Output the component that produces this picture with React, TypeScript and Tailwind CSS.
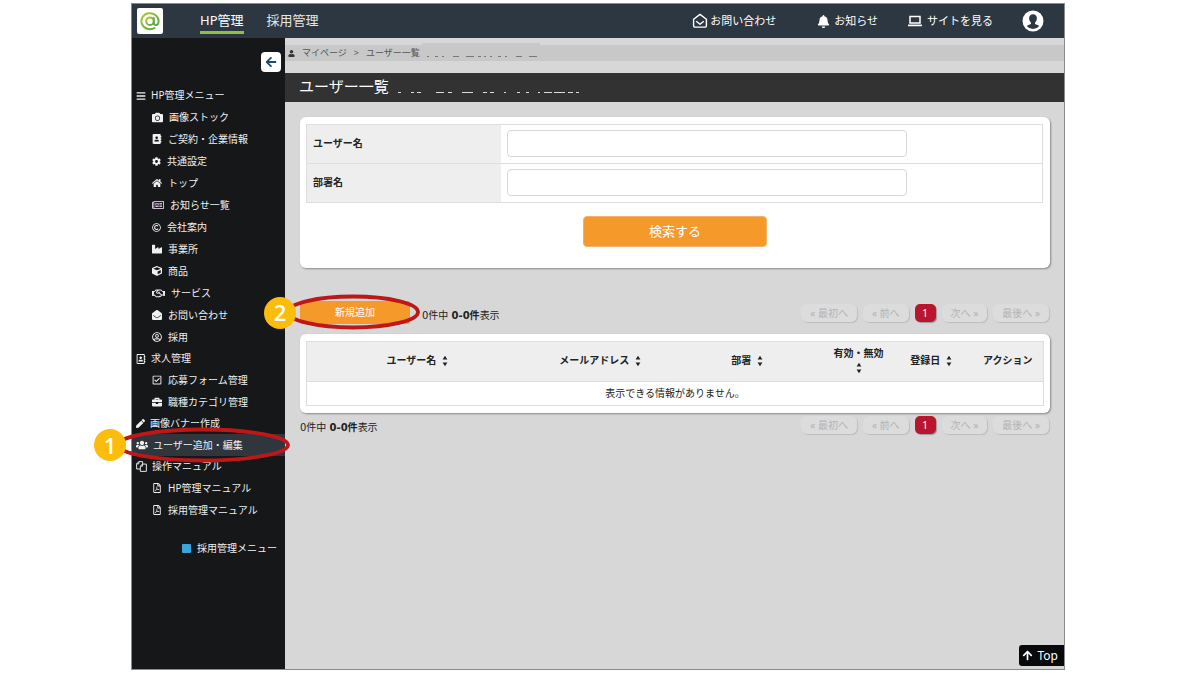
import React from "react";
import type { ReactNode } from "react";
import type { IconType } from "react-icons";
import {
  FaAddressBook,
  FaArrowLeft,
  FaArrowUp,
  FaBars,
  FaBell,
  FaBriefcase,
  FaCamera,
  FaCog,
  FaCube,
  FaEnvelopeOpen,
  FaHome,
  FaIndustry,
  FaPen,
  FaRegAddressBook,
  FaRegCheckSquare,
  FaRegCopyright,
  FaRegFilePdf,
  FaRegHandshake,
  FaRegNewspaper,
  FaRegUserCircle,
  FaUser,
  FaUsers,
} from "react-icons/fa";

type MenuItem = {
  label: string;
  icon: IconType | typeof FilesIcon;
  sub?: boolean;
  active?: boolean;
  iconClass?: string;
};

function FilesIcon({ className }: { className?: string }) {
  return (
    <svg viewBox="0 0 14 14" className={className} fill="none" stroke="currentColor" strokeWidth="1.200" strokeLinejoin="round" aria-hidden="true">
      <path d="M5.400 10.200H.8V3.600L3.600.8h4.800v3" />
      <path d="M3.600.8v2.800H.8" />
      <path d="M8.200 3.900h5v9.300H5.500V6.600z" />
      <path d="M8.200 3.900v2.700H5.500" />
    </svg>
  );
}

const menu: MenuItem[] = [
  { label: "HP管理メニュー", icon: FaBars },
  { label: "画像ストック", icon: FaCamera, sub: true, iconClass: "size-[11px]" },
  { label: "ご契約・企業情報", icon: FaAddressBook, sub: true },
  { label: "共通設定", icon: FaCog, sub: true, iconClass: "size-[9px]" },
  { label: "トップ", icon: FaHome, sub: true },
  { label: "お知らせ一覧", icon: FaRegNewspaper, sub: true, iconClass: "size-3 text-[#cdb9d0]" },
  { label: "会社案内", icon: FaRegCopyright, sub: true, iconClass: "size-[9px]" },
  { label: "事業所", icon: FaIndustry, sub: true },
  { label: "商品", icon: FaCube, sub: true },
  { label: "サービス", icon: FaRegHandshake, sub: true, iconClass: "size-[13px]" },
  { label: "お問い合わせ", icon: FaEnvelopeOpen, sub: true },
  { label: "採用", icon: FaRegUserCircle, sub: true },
  { label: "求人管理", icon: FaRegAddressBook },
  { label: "応募フォーム管理", icon: FaRegCheckSquare, sub: true },
  { label: "職種カテゴリ管理", icon: FaBriefcase, sub: true },
  { label: "画像バナー作成", icon: FaPen, iconClass: "size-[9px]" },
  { label: "ユーザー追加・編集", icon: FaUsers, active: true, iconClass: "size-3" },
  { label: "操作マニュアル", icon: FilesIcon, iconClass: "size-[11px]" },
  { label: "HP管理マニュアル", icon: FaRegFilePdf, sub: true },
  { label: "採用管理マニュアル", icon: FaRegFilePdf, sub: true },
];

const columns: { label: string; sortable: boolean; width: string }[] = [
  { label: "ユーザー名", sortable: true, width: "w-[224px]" },
  { label: "メールアドレス", sortable: true, width: "w-[142px]" },
  { label: "部署", sortable: true, width: "w-[152px]" },
  { label: "有効・無効", sortable: true, width: "w-[68px]" },
  { label: "登録日", sortable: true, width: "w-[80px]" },
  { label: "アクション", sortable: false, width: "w-[71px]" },
];

function Logo() {
  return (
    <svg viewBox="0 0 26 26" className="size-[26px]" fill="none" aria-hidden="true">
      <defs>
        <linearGradient id="logo" x1="0" y1="0" x2="1" y2="1">
          <stop offset="0" stopColor="#b5c83c" />
          <stop offset="1" stopColor="#4aa544" />
        </linearGradient>
      </defs>
      <g stroke="url(#logo)" strokeWidth="2" strokeLinecap="round">
        <path d="M17.500 20A8.600 8 0 1 1 21.600 13C21.600 15.800 20.400 17 18.800 17C17.400 17 16.800 16.200 16.800 14.800V9.800" />
        <circle cx="13" cy="13.200" r="3.800" />
      </g>
    </svg>
  );
}

function MailIcon() {
  return (
    <svg viewBox="0 0 16 16" className="size-4" fill="none" stroke="currentColor" strokeWidth="1.400" strokeLinejoin="round" aria-hidden="true">
      <path d="M1.600 6.200 8 1.400l6.400 4.800v6.600a1.300 1.300 0 0 1-1.300 1.300H2.900a1.300 1.300 0 0 1-1.300-1.300z" />
      <path d="M4.200 8.200 8 11.200 11.800 8.200" />
    </svg>
  );
}

function LaptopIcon() {
  return (
    <svg viewBox="0 0 16 12" className="h-3 w-4" fill="none" stroke="currentColor" strokeWidth="1.500" aria-hidden="true">
      <path d="M3 1.500h10v6.500H3z" />
      <path d="M1 10.400h14" strokeWidth="1.700" />
    </svg>
  );
}

function Avatar() {
  return (
    <svg viewBox="0 0 22 22" className="size-[22px]" aria-hidden="true">
      <circle cx="11" cy="11" r="10.500" fill="#fff" />
      <path
        d="M11 4.200c-2.500 0-3.900 1.700-3.900 4 0 1.800.8 3.400 1.900 4.200v1.500c-1.700.7-3.500 1.100-4.300 2.100A8.300 8.300 0 0 0 11 19a8.300 8.300 0 0 0 6.300-3c-.8-1-2.600-1.400-4.300-2.100v-1.500c1.100-.8 1.900-2.400 1.900-4.200 0-2.300-1.400-4-3.900-4z"
        fill="#2d3742"
      />
    </svg>
  );
}

function SortIcon() {
  return (
    <svg viewBox="0 0 6 12" className="mx-[3px] inline-block h-3 w-[6px] align-middle" fill="#222" aria-hidden="true">
      <path d="M3 .8 5.400 4.600H.6zM3 11.200.6 7.400h4.800z" />
    </svg>
  );
}

function Badge({ children, className }: { children: ReactNode; className: string }) {
  return (
    <span
      className={`absolute z-20 flex size-8 items-center justify-center rounded-full bg-[#fbbc0b] font-['Open_Sans','Noto_Sans',sans-serif] text-[22px] font-semibold text-white ${className}`}
    >
      {children}
    </span>
  );
}

function Pagination() {
  const muted =
    "h-[18px] rounded-[6px] bg-[#dcdcdc] px-[9px] text-[#b3b3b3] shadow-[1px_1px_1px_#bdbdbd]";
  return (
    <nav className="flex gap-[6px] pr-px text-[10px] leading-[18px]" aria-label="ページ送り">
      <button className={muted}>« 最初へ</button>
      <button className={muted}>« 前へ</button>
      <button className="h-[18px] w-[21px] rounded-[5px] bg-[#b9152f] text-white shadow-[1px_1px_1px_#999]">1</button>
      <button className={muted}>次へ »</button>
      <button className={muted}>最後へ »</button>
    </nav>
  );
}

function Count() {
  return (
    <p className="font-['DejaVu_Sans','Noto_Sans_CJK_JP',sans-serif] text-[10px] leading-4 text-[#222]">
      0件中 <b>0-0件</b>表示
    </p>
  );
}

function Sidebar() {
  return (
    <aside className="w-[153px] shrink-0 bg-[#151719] text-[10px] text-[#f0f0f0]">
      <div className="flex justify-end px-1 pt-[14px]">
        <button aria-label="メニューを閉じる" className="flex size-5 items-center justify-center rounded-[4px] bg-white text-[#1c4a6e]">
          <FaArrowLeft className="size-3" />
        </button>
      </div>
      <ul className="mt-[13px]">
        {menu.map(({ label, icon: Icon, sub, active, iconClass }) => (
          <li key={label} className={active ? "relative bg-[#2f363d]" : ""}>
            <a
              href="#"
              className={`flex items-center whitespace-nowrap ${
                sub ? "h-[22px] gap-[6px] pl-5" : active ? "h-[22px] gap-[5px] pl-1" : "h-[21px] gap-[5px] pl-1"
              }`}
            >
              <Icon className={`shrink-0 ${iconClass ?? "size-[10px]"}`} />
              {label}
            </a>
            {active && (
              <>
                <svg viewBox="0 0 174 36" className="pointer-events-none absolute -left-[16px] -top-[7px] z-10 h-9 w-[174px]" fill="none" aria-hidden="true">
                  <ellipse cx="87" cy="18" rx="85" ry="15.500" stroke="#bd1717" strokeWidth="3.800" />
                </svg>
                <Badge className="-left-[38px] -top-[5px]">1</Badge>
              </>
            )}
          </li>
        ))}
      </ul>
      <a href="#" className="mt-4 flex h-[22px] items-center justify-end gap-[6px] pr-2">
        <span className="size-[9px] rounded-[1px] bg-[#38a5e0]" />
        採用管理メニュー
      </a>
    </aside>
  );
}

function SearchRow({ id, label }: { id: string; label: string }) {
  return (
    <div className="flex h-[39px] border-b border-[#dedede]">
      <label htmlFor={id} className="flex w-[194px] shrink-0 items-center bg-[#eee] pb-px pl-[6px] font-bold">
        {label}
      </label>
      <div className="flex flex-1 items-center px-[6px] pb-px">
        <input id={id} type="text" className="h-[27px] w-[400px] max-w-full rounded-[4px] border border-[#d8d8d8] bg-white px-2" />
      </div>
    </div>
  );
}

export default function App() {
  return (
    <div className="flex min-h-screen flex-col bg-white pb-[5px] pl-[131px] pr-[135px] pt-[3px] font-['Noto_Sans','Noto_Sans_CJK_JP',sans-serif]">
      <div className="flex flex-1 flex-col border border-[#8b8b8b]">
        <header className="flex h-[34px] items-center bg-[#2d3742] pl-[5px] pr-5 text-white">
          <a href="#" aria-label="ホーム" className="rounded-[2px] bg-white">
            <Logo />
          </a>
          <nav className="ml-[37px] flex h-full gap-[23px] pt-[5px] text-[13px] leading-[22px]">
            <a href="#" className="h-[25px] border-b-[3px] border-[#8fc043]">HP管理</a>
            <a href="#" className="h-[25px] text-[#e6e6e6]">採用管理</a>
          </nav>
          <nav className="ml-auto flex items-center text-[11px]">
            <a href="#" className="flex items-center gap-[2px]">
              <MailIcon />
              お問い合わせ
            </a>
            <a href="#" className="ml-[41px] flex items-center gap-[4px]">
              <FaBell className="size-[13px]" />
              お知らせ
            </a>
            <a href="#" className="ml-[29px] flex items-center gap-[4px]">
              <LaptopIcon />
              サイトを見る
            </a>
            <a href="#" aria-label="アカウント" className="ml-[29px]">
              <Avatar />
            </a>
          </nav>
        </header>

        <div className="flex flex-1">
          <Sidebar />
          <main className="relative min-w-0 flex-1 bg-[#d7d7d7] text-[10px] text-[#222]">
            <nav aria-label="パンくず" className="mt-[7px] flex h-4 items-center bg-[#c8c8c8] pl-[3px] text-[9px] text-[#555]">
              <FaUser className="size-[7px] text-[#333]" />
              <a href="#" className="ml-[7px]">マイページ</a>
              <span className="mx-[7px]">&gt;</span>
              <span>ユーザー一覧</span>
              <svg viewBox="0 0 120 20" className="-mt-1 ml-[2px] h-5 w-[120px]" fill="none" aria-hidden="true">
                <path d="M0 2h118v14H0z" fill="#c8c8c8" />
                <path d="M5 15.500h110" stroke="#777" strokeDasharray="2 6 3 4 2 9 6 7 8 4 3 3 2 4" />
              </svg>
            </nav>

            <div className="mt-3 flex h-[29px] items-center bg-[#323232] pb-[3px] pl-[14px]">
              <h1 className="text-[15px] leading-6 text-white">ユーザー一覧</h1>
              <svg viewBox="0 0 190 10" className="ml-2 mt-[9px] h-[10px] w-[190px]" fill="none" aria-hidden="true">
                <path
                  d="M1 6.500h3m10 0h3m3 0h4m15 0h8m4 0h4m10 0h11m10 0h4m3 0h4m10 0h2m11 0h3m6 0h3m9 0h2m4 0h8m2 0h11m3 0h5m3 0h3"
                  stroke="#ddd"
                />
              </svg>
            </div>

            <div className="pl-[15px] pr-[14px] pt-[15px]">
              <form className="rounded-[6px] bg-white px-[7px] pb-[21px] pt-[7px] shadow-[1px_1px_2px_#888]">
                <div className="-ml-px border-x border-t border-[#dedede]">
                  <SearchRow id="user-name" label="ユーザー名" />
                  <SearchRow id="department" label="部署名" />
                </div>
                <div className="mt-[13px] flex justify-center">
                  <button type="button" className="h-[31px] w-[184px] rounded-[4px] border border-[#efb469] bg-[#f6992b] pb-[2px] text-[13px] leading-[26px] text-white">
                    検索する
                  </button>
                </div>
              </form>

              <div className="mt-8 flex h-6 items-center">
                <div className="relative">
                  <button className="block h-[23px] w-[110px] rounded-[2px] bg-[#f6992b] text-[10px] text-white">新規追加</button>
                  <svg viewBox="0 0 134 36" className="pointer-events-none absolute -left-[14px] -top-[7px] z-10 h-9 w-[134px]" fill="none" aria-hidden="true">
                    <ellipse cx="67" cy="18" rx="65" ry="15.500" stroke="#bd1717" strokeWidth="3.800" />
                  </svg>
                  <Badge className="-left-[36px] -top-[4px]">2</Badge>
                </div>
                <div className="ml-3 mt-2">
                  <Count />
                </div>
                <div className="ml-auto pt-[2px]">
                  <Pagination />
                </div>
              </div>

              <div className="mt-[10px] rounded-[6px] bg-white px-[6px] py-[7px] shadow-[1px_1px_2px_#888]">
                <table className="w-full table-fixed border-collapse border border-[#dedede]">
                  <colgroup>
                    {columns.map((c) => (
                      <col key={c.label} className={c.width} />
                    ))}
                  </colgroup>
                  <thead>
                    <tr className="h-10 bg-[#eee]">
                      {columns.map((c) => (
                        <th key={c.label} scope="col" className="px-[5px] pb-[3px] font-bold leading-[14px]">
                          {c.label} {c.sortable && <SortIcon />}
                        </th>
                      ))}
                    </tr>
                  </thead>
                  <tbody>
                    <tr className="h-6 border-t border-[#dedede]">
                      <td colSpan={6} className="pb-px text-center">表示できる情報がありません。</td>
                    </tr>
                  </tbody>
                </table>
              </div>

              <div className="mt-[3px] flex items-start justify-between">
                <div className="pt-1">
                  <Count />
                </div>
                <Pagination />
              </div>
            </div>

            <a href="#" className="absolute bottom-[3px] right-0 flex h-[21px] items-center gap-[5px] rounded-l-[3px] bg-[#08090c] pl-[3px] pr-[6px] text-[12px] text-white">
              <FaArrowUp className="size-[11px]" />
              Top
            </a>
          </main>
        </div>
      </div>
    </div>
  );
}
